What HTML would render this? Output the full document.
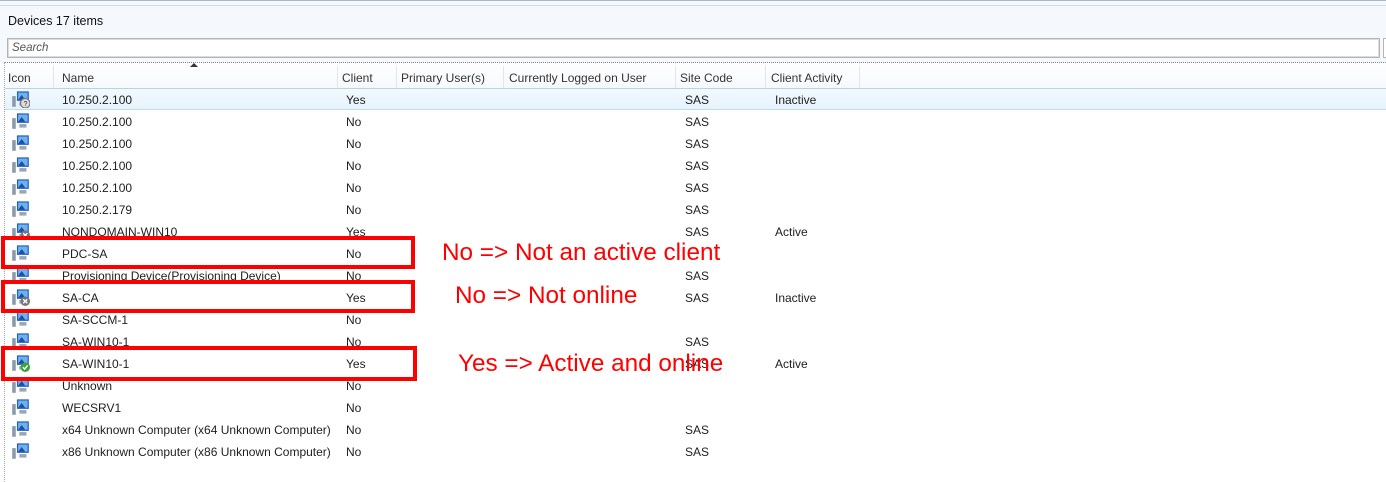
<!DOCTYPE html>
<html><head><style>
body{margin:0;width:1386px;height:477px;overflow:hidden;background:#fff;font-family:"Liberation Sans",sans-serif;font-size:12px;color:#1e1e1e;position:relative}
.top{position:absolute;left:0;top:0;width:1386px;height:62px;background:#f5f9fe;border-top:1px solid #a9b8c8}
.top:before{content:"";position:absolute;left:0;top:4px;width:1386px;height:1px;background:#cfdbe8}
.title{position:absolute;left:8px;top:13px;font-size:12.5px;color:#111}
.search{position:absolute;left:7px;top:37px;width:1371px;height:18px;border:1px solid #b5b5b5;background:#fff;box-shadow:inset 0 0 0 1px #ddd}
.search span{position:absolute;left:4px;top:3px;font-style:italic;color:#555;font-size:11.5px}
.search2{position:absolute;left:1383px;top:37px;width:5px;height:18px;border:1px solid #b5b5b5;background:#fff}
.dot{position:absolute;left:4px;top:62px;width:1382px;border-top:1px dotted #888}
.ldot{position:absolute;left:4px;top:62px;height:420px;border-left:1px dotted #9aa}
.hdr{position:absolute;left:5px;top:63px;width:1381px;height:25px;background:linear-gradient(#fff,#f6f9fc);border-bottom:1px solid #b9d3e6}
.hdr div{position:absolute;top:8px;color:#333}
.sep{position:absolute;top:66px;width:1px;height:22px;background:#e2e5ea}
.sel{position:absolute;left:5px;top:89px;width:1381px;height:20px;background:linear-gradient(#f3f9fe,#e6f3fd);border-bottom:1px solid #bfdcef}
.row{position:absolute;left:0;height:22px;width:1386px}
.row span{position:absolute;top:4px}
.ic{position:absolute;left:11px;top:0px;width:19px;height:19px}
.box{position:absolute;border:4px solid #ff0000;box-sizing:border-box}
.ann{position:absolute;color:#f00;font-size:24.3px}
</style></head><body>
<div class="top"><div class="title">Devices 17 items</div>
<div class="search"><span>Search</span></div><div class="search2"></div></div>
<div class="dot"></div>
<div class="hdr">
<div style="left:3px">Icon</div><div style="left:57px">Name</div><div style="left:337px">Client</div><div style="left:396px">Primary User(s)</div><div style="left:504px">Currently Logged on User</div><div style="left:675px">Site Code</div><div style="left:766px">Client Activity</div>
</div>
<div style="position:absolute;left:190px;top:63px;width:0;height:0;border-left:4px solid transparent;border-right:4px solid transparent;border-bottom:4px solid #333"></div>
<div class="sep" style="left:53px"></div><div class="sep" style="left:337px"></div><div class="sep" style="left:396px"></div><div class="sep" style="left:503px"></div><div class="sep" style="left:675px"></div><div class="sep" style="left:765px"></div><div class="sep" style="left:859px"></div>
<div class="ldot"></div>
<div class="sel"></div>
<div id="rows"></div>
<script>
var d=[["10.250.2.100","Yes","SAS","Inactive","q"],["10.250.2.100","No","SAS","",""],["10.250.2.100","No","SAS","",""],["10.250.2.100","No","SAS","",""],["10.250.2.100","No","SAS","",""],["10.250.2.179","No","SAS","",""],["NONDOMAIN-WIN10","Yes","SAS","Active","g"],["PDC-SA","No","","",""],["Provisioning Device(Provisioning Device)","No","SAS","",""],["SA-CA","Yes","SAS","Inactive","x"],["SA-SCCM-1","No","","",""],["SA-WIN10-1","No","SAS","",""],["SA-WIN10-1","Yes","SAS","Active","v"],["Unknown","No","","",""],["WECSRV1","No","","",""],["x64 Unknown Computer (x64 Unknown Computer)","No","SAS","",""],["x86 Unknown Computer (x86 Unknown Computer)","No","SAS","",""]];
var h="";
d.forEach(function(r,i){
var ov="";
if(r[4]=="q")ov='<circle cx="12" cy="12" r="4" fill="#ddd" stroke="#777"/><text x="10.5" y="14.5" font-size="6" fill="#333">?</text>';
if(r[4]=="x"||r[4]=="g")ov='<circle cx="12" cy="12" r="4" fill="#777"/><path d="M10.3 10.3l3.4 3.4M13.7 10.3l-3.4 3.4" stroke="#fff" stroke-width="1.2"/>';
if(r[4]=="v")ov='<circle cx="12" cy="12" r="4" fill="#3aa33a"/><path d="M10 12l1.5 1.5 2.5-3" stroke="#fff" stroke-width="1.2" fill="none"/>';
h+='<div class="row" style="top:'+(89+22*i)+'px"><svg class="ic" viewBox="0 0 16 16"><rect x="1" y="6" width="3" height="9" fill="#8a9aa8"/><rect x="5" y="2" width="10" height="8" fill="#1f5fc0"/><rect x="6" y="3" width="8" height="6" fill="#6fb0ee"/><path d="M6 9l3-4 3 4z" fill="#1a4da3"/><rect x="7" y="11" width="6" height="3" fill="#9aa7b3"/>'+ov+'</svg><span style="left:62px">'+r[0]+'</span><span style="left:346px">'+r[1]+'</span><span style="left:685px">'+r[2]+'</span><span style="left:775px">'+r[3]+'</span></div>';
});
document.getElementById("rows").innerHTML=h;
</script>
<div class="box" style="left:1px;top:236px;width:414px;height:33px"></div>
<div class="box" style="left:1px;top:280px;width:414px;height:33px"></div>
<div class="box" style="left:1px;top:346px;width:416px;height:35px"></div>
<div class="ann" style="left:442px;top:239px">No =&gt; Not an active client</div>
<div class="ann" style="left:455px;top:282px">No =&gt; Not online</div>
<div class="ann" style="left:458px;top:350px">Yes =&gt; Active and online</div>
</body></html>
